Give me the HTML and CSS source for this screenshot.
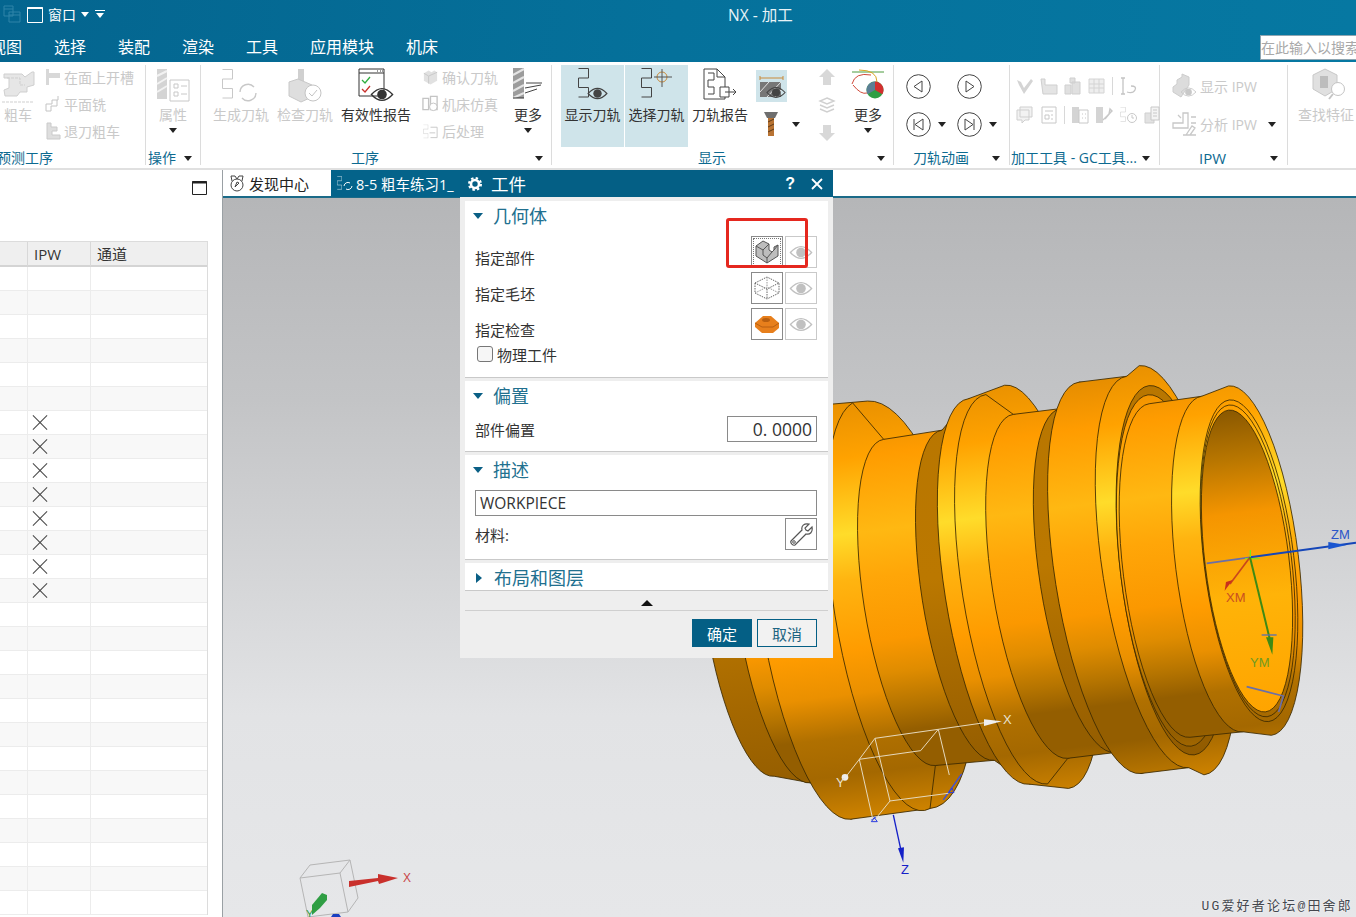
FILE: index.html
```html
<!DOCTYPE html>
<html lang="zh">
<head>
<meta charset="utf-8">
<title>NX - 加工</title>
<link rel="stylesheet" href="styles.css">
</head>
<body>
<svg class="defs" width="0" height="0" aria-hidden="true">
  <defs>
    <symbol id="eye" viewBox="0 0 22 16"><path d="M1 8Q11-3 21 8 11 19 1 8Z" fill="none" stroke="currentColor" stroke-width="1.2"/><circle cx="11" cy="8" r="4.5" fill="currentColor"/></symbol>
    <symbol id="zig" viewBox="0 0 11 30"><path d="M.5.5h10v9.5H.5v9.5h10v9.5H.5" fill="none" stroke="currentColor" stroke-width="1"/></symbol>
    <symbol id="block" viewBox="0 0 18 18"><path d="M2 5l5-3 3 2 3-2 3 2v9l-7 4-7-4z" fill="currentColor" opacity=".55"/><path d="M2 5l5 3v8M7 8l9-4" fill="none" stroke="currentColor"/></symbol>
    <linearGradient id="gMain" gradientUnits="userSpaceOnUse" x1="0" y1="-210" x2="0" y2="210">
      <stop offset="0" stop-color="#e08a00"/><stop offset=".14" stop-color="#ff9c00"/><stop offset=".32" stop-color="#ffb812"/><stop offset=".43" stop-color="#ffa608"/><stop offset=".58" stop-color="#fb9800"/><stop offset=".66" stop-color="#df8c00"/><stop offset=".74" stop-color="#b57400"/><stop offset=".8" stop-color="#945e00"/><stop offset=".89" stop-color="#945e00"/><stop offset="1" stop-color="#c27c00"/>
    </linearGradient>
    <linearGradient id="gBright" gradientUnits="userSpaceOnUse" x1="0" y1="-210" x2="0" y2="210">
      <stop offset="0" stop-color="#e89000"/><stop offset=".14" stop-color="#ffa200"/><stop offset=".32" stop-color="#ffdc2a"/><stop offset=".43" stop-color="#ffb410"/><stop offset=".595" stop-color="#ff9c00"/><stop offset=".7" stop-color="#ea9000"/><stop offset=".8" stop-color="#b07000"/><stop offset=".89" stop-color="#a46800"/><stop offset="1" stop-color="#d08400"/>
    </linearGradient>
    <linearGradient id="gDark" gradientUnits="userSpaceOnUse" x1="0" y1="-210" x2="0" y2="210">
      <stop offset="0" stop-color="#b87600"/><stop offset=".45" stop-color="#bb7800"/><stop offset=".7" stop-color="#a56800"/><stop offset="1" stop-color="#8c5800"/>
    </linearGradient>
    <linearGradient id="gHole" gradientUnits="userSpaceOnUse" x1="0" y1="-152" x2="0" y2="152">
      <stop offset="0" stop-color="#8a5800"/><stop offset=".16" stop-color="#b87600"/><stop offset=".34" stop-color="#f59500"/><stop offset=".62" stop-color="#ffb308"/><stop offset="1" stop-color="#ffa400"/>
    </linearGradient>
  </defs>
</svg>

<div class="app">
  <header class="titlebar">
    <div class="quick">
      <svg class="qa-dim" width="18" height="18" viewBox="0 0 18 18"><path d="M1 1h9v10H1zM1 4h9M6 7h11v10H6zM6 10h11" fill="none" stroke="currentColor"/></svg>
      <svg class="qa-win" width="16" height="17" viewBox="0 0 16 17"><path d="M.5 1.5h15v15H.5z" fill="none" stroke="currentColor"/><path d="M.5 2h15" stroke="currentColor" stroke-width="2"/></svg>
      <span class="qa-text">窗口</span>
      <i class="caret caret-white"></i>
      <span class="qa-more"><i class="caret caret-white"></i></span>
    </div>
    <div class="app-title">NX - 加工</div>
  </header>

  <nav class="menubar">
    <span>视图</span><span>选择</span><span>装配</span><span>渲染</span><span>工具</span><span>应用模块</span><span>机床</span>
    <div class="search">在此输入以搜索</div>
  </nav>

  <section class="ribbon">
    <div class="group g-rough">
      <div class="group-body">
        <div class="big off w36">
          <svg class="ic" width="34" height="36" viewBox="0 0 34 36"><path d="M3 6h18l3 3 7-5h2v13l-7 2v5h-7l-3 4H4l-1-6 5-2V10H3z" fill="#e6e6e6" stroke="#cfcfcf"/><path d="M6 10h13v7h5M1 34h32" fill="none" stroke="#cfcfcf" stroke-dasharray="3 1"/></svg>
          <span>粗车</span>
        </div>
        <div class="smalls ml9">
          <div class="small off"><svg width="16" height="18" viewBox="0 0 16 18"><path d="M1 1h3v16H1zM4 5h11v5H4z" fill="#d8d8d8"/></svg><span>在面上开槽</span></div>
          <div class="small off"><svg width="16" height="18" viewBox="0 0 16 18"><path d="M1 16V9h6V5h6v-4M1 16h5v-5h6V5" fill="none" stroke="#c4c4c4"/></svg><span>平面铣</span></div>
          <div class="small off"><svg width="16" height="18" viewBox="0 0 16 18"><path d="M2 1v16h13v-4H7V9h5V5H6V1z" fill="#dedede" stroke="#cacaca"/></svg><span>退刀粗车</span></div>
        </div>
      </div>
      <div class="group-label lb-rough">预测工序</div>
    </div>

    <div class="group g-oper">
      <div class="group-body">
        <div class="big off w56">
          <svg class="ic" width="34" height="36" viewBox="0 0 34 36"><path d="M1 1h10v30H1z" fill="#d4d4d4"/><path d="M1 8l10-5M1 16l10-6M1 24l10-6" stroke="#f2f2f2" stroke-width="2"/><path d="M14 12h19v21H14zM18 16h4v4h-4zM18 24h4v4h-4zM25 18h6M25 26h6" fill="none" stroke="#c8c8c8"/></svg>
          <span>属性</span>
          <i class="caret more-caret"></i>
        </div>
      </div>
      <div class="group-label lb-left">操作<i class="caret"></i></div>
    </div>

    <div class="group g-op">
      <div class="group-body">
        <div class="big off w64">
          <svg class="ic" width="38" height="36" viewBox="0 0 38 36"><use href="#zig" x="0" y="1" width="11" height="30" color="#c8c8c8"/><path d="M18 24a8 8 0 0 1 14-5m2 6a8 8 0 0 1-14 5" fill="none" stroke="#c8c8c8" stroke-width="1.4"/></svg>
          <span>生成刀轨</span>
        </div>
        <div class="big off w64">
          <svg class="ic" width="38" height="36" viewBox="0 0 38 36"><path d="M12 1h6v12h-6z" fill="#d0d0d0"/><path d="M3 14l9-3 14 6v12l-11 5-12-6z" fill="#dedede" stroke="#c8c8c8"/><circle cx="27" cy="25" r="8" fill="#fff" stroke="#c4c4c4"/><path d="M23 25l3 3 5-6" fill="none" stroke="#c4c4c4"/></svg>
          <span>检查刀轨</span>
        </div>
        <div class="big w78">
          <svg class="ic" width="36" height="36" viewBox="0 0 36 36"><path d="M1 1h25v27H1zM1 5h25" fill="none" stroke="#333"/><path d="M19 3h1M22 3h1M24 3h1" stroke="#333"/><path d="M4 12l3 3 5-6" fill="none" stroke="#2fae3f" stroke-width="1.3"/><path d="M4 21l3 3 5-6" fill="none" stroke="#c9302c" stroke-width="1.3"/><use href="#eye" x="12" y="18" width="24" height="17" color="#333"/></svg>
          <span>有效性报告</span>
        </div>
        <div class="smalls ml7">
          <div class="small off"><svg width="17" height="18" viewBox="0 0 18 18"><use href="#block" width="18" height="18" color="#c8c8c8"/></svg><span>确认刀轨</span></div>
          <div class="small off"><svg width="17" height="18" viewBox="0 0 18 18"><path d="M1 3h6v12H1zM9 1h7v14H9z" fill="none" stroke="#c4c4c4" stroke-width="1.4"/><circle cx="12" cy="12" r="4" fill="#fff" stroke="#c4c4c4"/></svg><span>机床仿真</span></div>
          <div class="small off"><svg width="17" height="18" viewBox="0 0 18 18"><use href="#zig" x="1" y="2" width="6" height="15" color="#c8c8c8"/><path d="M9 5h7v11H9M8 11h6" fill="none" stroke="#c8c8c8"/></svg><span>后处理</span></div>
        </div>
        <div class="big w36 ml12">
          <svg class="ic" width="32" height="36" viewBox="0 0 32 36"><path d="M1 0h11v30H1z" fill="#9c9c9c"/><path d="M1 7l11-6M1 15l11-6M1 23l11-6M1 30l11-5" stroke="#e4e4e4" stroke-width="2"/><path d="M1 30h11" stroke="#333"/><path d="M14 15h16M13 20l16-3M13 25l12-4" fill="none" stroke="#444"/></svg>
          <span>更多</span>
          <i class="caret more-caret"></i>
        </div>
      </div>
      <div class="group-label">工序<i class="caret caret-far"></i></div>
    </div>

    <div class="group g-show">
      <div class="group-body">
        <div class="big on w63">
          <svg class="ic" width="34" height="36" viewBox="0 0 34 36"><use href="#zig" x="2" y="0" width="11" height="30" color="#444"/><use href="#eye" x="11" y="18" width="21" height="15" color="#444"/></svg>
          <span>显示刀轨</span>
        </div>
        <div class="big on w63 ml1">
          <svg class="ic" width="34" height="36" viewBox="0 0 34 36"><use href="#zig" x="1" y="0" width="11" height="30" color="#444"/><circle cx="22" cy="9" r="5" fill="none" stroke="#c98a3a"/><path d="M14 9h18M22 1v18" stroke="#555"/></svg>
          <span>选择刀轨</span>
        </div>
        <div class="big w62 ml1">
          <svg class="ic" width="34" height="36" viewBox="0 0 34 36"><path d="M1 1h13l8 8v22H1z" fill="none" stroke="#444"/><path d="M14 1v8h8M5 5h6v7H5v7h6v7H5" fill="none" stroke="#444"/><path d="M17 19h9v10h-9zM22 24h11m-3-3l3 3-3 3" fill="#fff" stroke="#444"/></svg>
          <span>刀轨报告</span>
        </div>
        <div class="tool-col">
          <div class="toggle">
            <svg width="31" height="32" viewBox="0 0 31 32"><path d="M4 8h23M4 6v4m23-4v4" stroke="#c98a3a" fill="none"/><path d="M4 12h21v15H4z" fill="#777"/><path d="M4 22l9-10M11 27l14-15M19 27l6-7" stroke="#e0e0e0"/><use href="#eye" x="10" y="15" width="20" height="15" color="#444"/></svg>
          </div>
          <div class="tool-row">
            <svg width="16" height="26" viewBox="0 0 16 26"><path d="M1 1h14l-3 6H4z" fill="#6e6e6e"/><path d="M5 7h6v18H5z" fill="#b87333"/><path d="M5 11l6-3M5 16l6-3M5 21l6-3" stroke="#5c3a18"/></svg>
            <i class="caret"></i>
          </div>
        </div>
        <div class="arrow-col">
          <svg width="18" height="18" viewBox="0 0 18 18"><path d="M9 1l8 8h-4v8H5V9H1z" fill="#d8d8d8"/></svg>
          <svg width="18" height="16" viewBox="0 0 18 16"><path d="M9 1l7 3-7 3-7-3zM2 8l7 3 7-3M2 12l7 3 7-3" fill="none" stroke="#d0d0d0" stroke-width="1.4"/></svg>
          <svg width="18" height="18" viewBox="0 0 18 18"><path d="M9 17l8-8h-4V1H5v8H1z" fill="#d8d8d8"/></svg>
        </div>
        <div class="big w44 ml4">
          <svg class="ic" width="34" height="36" viewBox="0 0 34 36"><path d="M1 4h32" stroke="#4a9a3c"/><path d="M8 2q18 0 18 12" fill="none" stroke="#d9a520"/><path d="M1 16Q4 4 20 7M2 17q8 10 14 8" fill="none" stroke="#d04a3a"/><circle cx="24" cy="22" r="8.5" fill="#2f9e44"/><path d="M24 22V13.500a8.500 8.500 0 0 1 7.400 12.700z" fill="#d32f2f"/><path d="M24 22V13.500a8.500 8.500 0 0 0-7.400 12.700z" fill="#5b7f95"/></svg>
          <span>更多</span>
          <i class="caret more-caret"></i>
        </div>
      </div>
      <div class="group-label lb-show">显示<i class="caret caret-show"></i></div>
    </div>

    <div class="group g-anim">
      <div class="group-body anim-grid">
        <div class="anim-btn"><svg width="25" height="25" viewBox="0 0 25 25"><circle cx="12.500" cy="12.500" r="11.800" fill="none" stroke="#444"/><path d="M16 7v11L8 12.500z" fill="none" stroke="#444"/></svg></div>
        <div class="anim-btn"><svg width="25" height="25" viewBox="0 0 25 25"><circle cx="12.500" cy="12.500" r="11.800" fill="none" stroke="#444"/><path d="M9 7v11l8-5.500z" fill="none" stroke="#444"/></svg></div>
        <div class="anim-btn"><svg width="25" height="25" viewBox="0 0 25 25"><circle cx="12.500" cy="12.500" r="11.800" fill="none" stroke="#444"/><path d="M8 7v11M17 7v11L9 12.500z" fill="none" stroke="#444"/></svg><i class="caret"></i></div>
        <div class="anim-btn"><svg width="25" height="25" viewBox="0 0 25 25"><circle cx="12.500" cy="12.500" r="11.800" fill="none" stroke="#444"/><path d="M17 7v11M8 7v11l8-5.500z" fill="none" stroke="#444"/></svg><i class="caret"></i></div>
      </div>
      <div class="group-label lb-anim">刀轨动画<i class="caret"></i></div>
    </div>

    <div class="group g-gc">
      <div class="group-body gc-rows">
        <div class="gc-row">
          <svg width="18" height="18" viewBox="0 0 18 18"><path d="M1 3l4 2 3 6 7-9 2 2-9 13L3 8z" fill="#d4d4d4"/></svg>
          <svg width="18" height="18" viewBox="0 0 18 18"><path d="M1 2h4v6h12v9H3z" fill="#e4e4e4" stroke="#cfcfcf"/></svg>
          <svg width="18" height="18" viewBox="0 0 18 18"><path d="M1 8h6v9H1zM8 5h8v12H8zM6 1h5v5H6z" fill="#e0e0e0" stroke="#cfcfcf"/></svg>
          <svg width="18" height="18" viewBox="0 0 18 18"><path d="M1 2h15v14H1zM1 7h15M1 11h15M6 2v14M11 2v14" fill="#eee" stroke="#d4d4d4"/></svg>
          <i class="gc-sep"></i>
          <svg width="18" height="18" viewBox="0 0 18 18"><path d="M2 1h4M2 17h4M4 1v16M8 15q6 2 8-2t-4-4" fill="none" stroke="#c4c4c4" stroke-width="1.3"/></svg>
        </div>
        <div class="gc-row">
          <svg width="18" height="18" viewBox="0 0 18 18"><path d="M4 1h12v10H4zM1 4h12v10H9l-3 3v-3H1z" fill="#f2f2f2" stroke="#cfcfcf"/></svg>
          <svg width="18" height="18" viewBox="0 0 18 18"><path d="M2 1h14v16H2zM5 5h8M5 9h4v4H5zM11 9h2M11 13h2" fill="none" stroke="#c8c8c8"/></svg>
          <i class="gc-sep"></i>
          <svg width="18" height="18" viewBox="0 0 18 18"><path d="M1 1h7v16H1z" fill="#d4d4d4"/><path d="M8 4h9v13H8zM11 8h1M14 8h1M11 12h1M14 12h1" fill="none" stroke="#c8c8c8"/></svg>
          <svg width="18" height="18" viewBox="0 0 18 18"><path d="M1 1h7v16H1z" fill="#d4d4d4"/><path d="M8 14l6-6 1-5 2 2-2 2-5 6" fill="none" stroke="#c8c8c8" stroke-width="1.4"/></svg>
          <svg width="18" height="18" viewBox="0 0 18 18"><use href="#zig" x="1" y="1" width="6" height="15" color="#c8c8c8"/><circle cx="13" cy="12" r="4.500" fill="none" stroke="#c8c8c8"/><path d="M13 9v3h2" stroke="#c8c8c8" fill="none"/></svg>
          <svg width="18" height="18" viewBox="0 0 18 18"><path d="M2 7h9v10H2z" fill="#e2e2e2" stroke="#cfcfcf"/><path d="M8 1h8v13H8zM10 4h4M10 7h4M10 10h4" fill="#f4f4f4" stroke="#c8c8c8"/></svg>
        </div>
      </div>
      <div class="group-label lb-gc">加工工具 - GC工具...<i class="caret"></i></div>
    </div>

    <div class="group g-ipw">
      <div class="group-body ipw-rows">
        <div class="ipw-row off">
          <svg width="25" height="26" viewBox="0 0 25 26"><path d="M1 14l4-3V7l5-3V1l7 3v8L9 24l-8-5z" fill="#dcdcdc" stroke="#cdcdcd"/><use href="#eye" x="8" y="13" width="17" height="12" color="#c8c8c8"/></svg>
          <span>显示 IPW</span>
        </div>
        <div class="ipw-row off">
          <svg width="25" height="26" viewBox="0 0 25 26"><path d="M1 12h10V2h5v15H1zM19 6h5M19 12h5M6 4l3 3M24 24H11M14 24l6-9 3 2-5 7" fill="none" stroke="#c8c8c8" stroke-width="1.3"/></svg>
          <span>分析 IPW</span>
          <i class="caret"></i>
        </div>
      </div>
      <div class="group-label lb-ipw">IPW<i class="caret"></i></div>
    </div>

    <div class="group g-find">
      <div class="group-body">
        <div class="big off find">
          <svg class="ic" width="34" height="36" viewBox="0 0 34 36"><path d="M1 7l12-6 12 6v14l-12 7-12-7z" fill="#e0e0e0" stroke="#c8c8c8"/><path d="M8 8h8v12H8z" fill="#bdbdbd"/><circle cx="26" cy="21" r="6.500" fill="#fff" stroke="#c4c4c4"/><path d="M21 26l-4 5" stroke="#c4c4c4" stroke-width="2"/></svg>
          <span>查找特征</span>
        </div>
      </div>
    </div>
  </section>

  <div class="workspace">
    <aside class="left-panel">
      <div class="panel-top"><svg class="restore" width="15" height="14" viewBox="0 0 15 14"><path d="M.5.500h14v13H.5z" fill="none" stroke="#222"/><path d="M0 1.500h15" stroke="#222" stroke-width="2"/></svg></div>
      <div class="nav-table">
        <div class="t-row t-head"><div></div><div>IPW</div><div>通道</div></div>
        <div class="t-row"><div></div><div></div><div></div></div>
        <div class="t-row"><div></div><div></div><div></div></div>
        <div class="t-row"><div></div><div></div><div></div></div>
        <div class="t-row"><div></div><div></div><div></div></div>
        <div class="t-row"><div></div><div></div><div></div></div>
        <div class="t-row"><div></div><div></div><div></div></div>
        <div class="t-row"><div></div><div class="x"></div><div></div></div>
        <div class="t-row"><div></div><div class="x"></div><div></div></div>
        <div class="t-row"><div></div><div class="x"></div><div></div></div>
        <div class="t-row"><div></div><div class="x"></div><div></div></div>
        <div class="t-row"><div></div><div class="x"></div><div></div></div>
        <div class="t-row"><div></div><div class="x"></div><div></div></div>
        <div class="t-row"><div></div><div class="x"></div><div></div></div>
        <div class="t-row"><div></div><div class="x"></div><div></div></div>
        <div class="t-row"><div></div><div></div><div></div></div>
        <div class="t-row"><div></div><div></div><div></div></div>
        <div class="t-row"><div></div><div></div><div></div></div>
        <div class="t-row"><div></div><div></div><div></div></div>
        <div class="t-row"><div></div><div></div><div></div></div>
        <div class="t-row"><div></div><div></div><div></div></div>
        <div class="t-row"><div></div><div></div><div></div></div>
        <div class="t-row"><div></div><div></div><div></div></div>
        <div class="t-row"><div></div><div></div><div></div></div>
        <div class="t-row"><div></div><div></div><div></div></div>
        <div class="t-row"><div></div><div></div><div></div></div>
        <div class="t-row"><div></div><div></div><div></div></div>
        <div class="t-row"><div></div><div></div><div></div></div>
      </div>
    </aside>

    <main class="main">
      <div class="tabs">
        <div class="tab tab-light">
          <svg width="16" height="17" viewBox="0 0 16 17"><circle cx="8" cy="10" r="6" fill="none" stroke="#444"/><path d="M3 6L2 1h4l2 3 2-3h4l-1 5M6 12l2-5 2 1z" fill="none" stroke="#444"/></svg>
          <span>发现中心</span>
        </div>
        <div class="tab tab-dark">
          <svg width="16" height="17" viewBox="0 0 16 17"><use href="#zig" x="0" y="1" width="5" height="14" color="#fff"/><path d="M7 11a4 4 0 0 1 6-3m2 3a4 4 0 0 1-6 3" fill="none" stroke="#fff"/></svg>
          <span>8-5 粗车练习1_</span>
        </div>
      </div>
      <div class="viewport">
        <svg class="scene" viewBox="223 198 1133 719" preserveAspectRatio="none">
          <g transform="translate(1247 561) rotate(-7)" stroke="#3a2800" stroke-width=".8">
            <g transform="skewX(2)">
            <path fill="url(#gDark)" d="M-501-156A43 156 0 0 0-501 156L-466 167A46 167 0 0 0-466-167Z"/>
            <path fill="url(#gMain)" d="M-466-167A46 167 0 0 0-466 167L-432 208A57.400 208 0 0 0-432-208Z"/>
            <path fill="url(#gBright)" d="M-432-208A57.400 208 0 0 0-432 208L-352 207A70 206 0 0 0-350-205Z"/>
            <path fill="url(#gBright)" d="M-365-205A56.600 205 0 0 0-352 207L-340 165A45.500 165 0 0 0-340-165Z"/>
            <path fill="url(#gMain)" d="M-340-165A45.500 165 0 0 0-340 165L-281 167A46 167 0 0 0-281-167Z"/>
            <path fill="url(#gDark)" d="M-281-167A46 167 0 0 0-281 167L-250 195A53.800 195 0 0 0-250-195Z"/>
            <path fill="url(#gBright)" d="M-250-195A53.800 195 0 0 0-250 195L-212 204A56 204 0 0 0-212-204Z"/>
            <path fill="url(#gBright)" d="M-232-197A54.400 197 0 0 0-232 197L-208 174A48 174 0 0 0-208-174Z"/>
            <path fill="url(#gMain)" d="M-208-174A48 174 0 0 0-208 174L-160 174A48 174 0 0 0-160-174Z"/>
            <path fill="url(#gDark)" d="M-160-174A48 174 0 0 0-160 174L-138 198A54.600 198 0 0 0-138-198Z"/>
            <path fill="url(#gMain)" d="M-138-198A54.600 198 0 0 0-138 198L-90 198A54.600 198 0 0 0-90-198Z"/>
            <path fill="url(#gBright)" d="M-90-198A54.600 198 0 0 0-90 198L-76 207A57.100 207 0 0 0-76-207Z"/>
            </g>
            <ellipse cx="-76" cy="0" rx="51" ry="186" fill="url(#gDark)"/>
            <ellipse cx="-78" cy="0" rx="49" ry="177" fill="url(#gMain)"/>
            <path fill="url(#gMain)" d="M-78-168A46.400 168 0 0 0-78 168L-25 169A46.600 169 0 0 0-25-169Z"/>
            <path fill="url(#gBright)" d="M-25-169A46.600 169 0 0 0-25 169L3 176A48.600 176 0 0 0 3-176Z"/>
            <ellipse cx="2" cy="0" rx="45" ry="162" fill="url(#gBright)"/>
            <ellipse cx="1" cy="0" rx="43.500" ry="157" fill="url(#gBright)"/>
            <ellipse cx="0" cy="0" rx="42" ry="152" fill="url(#gHole)"/>
          </g>
          <g transform="translate(1190 520) scale(.3333)" fill="none">
            <path d="M50 130L180 112" stroke="#6a6fa8" stroke-width="5"/>
            <path d="M180 112L498 68" stroke="#1546b8" stroke-width="6"/>
            <path d="M415 66l55 9-55 13z" fill="#1a56d0"/>
            <path d="M165 116h44M181 90v30" stroke="#7ee01e" stroke-width="4"/>
            <path d="M180 112L120 192" stroke="#c9461c" stroke-width="5"/>
            <path d="M128 180l-24 32 4-26z" fill="#c9301c"/>
            <path d="M180 112L240 360" stroke="#3f8a14" stroke-width="6"/>
            <path d="M228 352h22l-3 52z" fill="#3f8a14"/>
            <path d="M215 345h45" stroke="#5a70b0" stroke-width="4"/>
            <path d="M170 500l110 28-14 48" stroke="#6a6fa8" stroke-width="5"/>
          </g>
          <text class="lab lab-zm" x="1331" y="539">ZM</text>
          <text class="lab lab-xm" x="1226" y="602">XM</text>
          <text class="lab lab-ym" x="1250" y="667">YM</text>
          <g transform="translate(680 640) scale(.3333)" fill="none">
            <path d="M790 480l55-78M575 540l12-8" stroke="#3a50e0" stroke-width="4"/>
            <path d="M585 295L775 268 722 332 538 358zM585 295L630 483M775 268L808 405M538 358L580 545M630 483L805 460M630 483L580 545" stroke="#e6d9bd" stroke-width="3"/>
            <path d="M775 268L915 248M538 358L498 410" stroke="#e6d9bd" stroke-width="3"/>
            <path d="M912 238l54 6-54 14z" fill="#eee"/>
            <circle cx="495" cy="412" r="10" fill="#eee"/>
            <path d="M640 525L665 640" stroke="#1420c8" stroke-width="4"/>
            <path d="M654 625l18-3-2 46z" fill="#1420c8"/>
            <path d="M574 545h18l-9-12zM806 458h16l-6-14z" stroke="#2a3ce0" stroke-width="3"/>
          </g>
          <text class="lab lab-x" x="1003" y="724">X</text>
          <text class="lab lab-x" x="836" y="787">Y</text>
          <text class="lab lab-z" x="901" y="874">Z</text>
          <g fill="none">
            <path d="M300 878L310 865 350 860 340 873zM340 873L348 912 308 917M300 878L308 917M350 860L358 898 348 912" stroke="#b5b5b5"/>
            <path d="M349 881L378 878 378 874 398 878 379 884 378 881 349 887Z" fill="#c9302c"/>
            <path d="M327 895L322 893 312 905 312 915 320 908 327 900Z" fill="#2f9e44"/>
            <path d="M331 917h10l-2-3h-6z" fill="#1a3fc0"/>
          </g>
          <text class="lab lab-ax" x="403" y="882">X</text>
          <text class="lab lab-ay" x="306" y="918">Y</text>
        </svg>
        <div class="watermark">UG爱好者论坛@田舍郎</div>
      </div>
    </main>
  </div>

  <div class="dialog">
    <div class="dlg-title">
      <svg width="14" height="14" viewBox="0 0 14 14"><circle cx="7" cy="7" r="4" fill="none" stroke="#fff" stroke-width="2.600"/><circle cx="7" cy="7" r="5.900" fill="none" stroke="#fff" stroke-width="2.200" stroke-dasharray="2.400 2.230"/></svg>
      <span class="dlg-name">工件</span>
      <span class="dlg-help">?</span>
      <svg class="dlg-x" width="12" height="12" viewBox="0 0 12 12"><path d="M1 1l10 10M11 1L1 11" stroke="#fff" stroke-width="1.800"/></svg>
    </div>
    <div class="dlg-body">
      <section class="sec sec-geo">
        <div class="sec-head"><i class="tri"></i>几何体</div>
        <div class="geo-row">
          <span>指定部件</span>
          <button class="ib ib-dotted"><svg width="24" height="24" viewBox="0 0 24 24"><path d="M1 6l7-5 6 3v6l3 2 2-2V7l4-2v11l-11 7-11-7z" fill="#bdbdbd" stroke="#555"/><path d="M1 6l7 4v5l4 3v5M8 10l6-6M12 18l5-6M19 10l4-5" fill="none" stroke="#555"/></svg></button>
          <button class="ib eye"><svg width="24" height="17"><use href="#eye" width="24" height="17"/></svg></button>
        </div>
        <div class="geo-row">
          <span>指定毛坯</span>
          <button class="ib"><svg width="26" height="26" viewBox="0 0 26 26"><path d="M1 8l12-6 12 6-12 6zM1 8v10l12 6 12-6V8M13 14v10" fill="none" stroke="#666" stroke-dasharray="1.500 1"/><path d="M1 18l12-6 12 6M13 2v10" fill="none" stroke="#999" stroke-dasharray="1.500 1"/></svg></button>
          <button class="ib eye"><svg width="24" height="17"><use href="#eye" width="24" height="17"/></svg></button>
        </div>
        <div class="geo-row">
          <span>指定检查</span>
          <button class="ib"><svg width="26" height="20" viewBox="0 0 26 20"><path d="M1 9l8-7h8l8 7v5l-6 5H8L1 13z" fill="#e77f1c"/><path d="M1 9l7 4h11l6-4" fill="none" stroke="#b85f10"/><ellipse cx="12" cy="6" rx="4" ry="2" fill="#b85f10"/></svg></button>
          <button class="ib eye"><svg width="24" height="17"><use href="#eye" width="24" height="17"/></svg></button>
        </div>
        <label class="check"><i class="box"></i>物理工件</label>
      </section>
      <section class="sec sec-off">
        <div class="sec-head"><i class="tri"></i>偏置</div>
        <div class="off-row"><span>部件偏置</span><div class="input num">0. 0000</div></div>
      </section>
      <section class="sec sec-desc">
        <div class="sec-head"><i class="tri"></i>描述</div>
        <div class="input desc">WORKPIECE</div>
        <div class="mat-row">
          <span>材料:</span>
          <button class="ib"><svg width="24" height="24" viewBox="0 0 24 24"><path d="M2 19l11-11c-1-4 2-7 7-6l-4 4 1 2 2 1 4-4c1 5-2 8-6 7L6 23c-2 1-5-2-4-4z" fill="none" stroke="#555" stroke-width="1.200"/><circle cx="5" cy="20" r="1.300" fill="none" stroke="#555"/></svg></button>
        </div>
      </section>
      <section class="sec sec-layout">
        <div class="sec-head"><i class="tri-r"></i>布局和图层</div>
      </section>
      <div class="collapse"><i class="tri-up"></i></div>
      <div class="dlg-foot">
        <button class="btn btn-ok">确定</button>
        <button class="btn btn-cancel">取消</button>
      </div>
    </div>
  </div>
  <div class="highlight"></div>
</div>
</body>
</html>
```
FILE: styles.css
```css
* { box-sizing: border-box; }
html, body { margin: 0; padding: 0; height: 100%; overflow: hidden; background: #fff; }
body { font-family: "Open Sans", "Noto Sans CJK SC", sans-serif; font-size: 14px; color: #333; }
.defs { position: absolute; }
.app { position: relative; width: 1356px; height: 917px; overflow: hidden; display: flex; flex-direction: column; }

/* top bars */
.titlebar { height: 31px; padding-bottom: 3px; background: linear-gradient(90deg, #04658f, #05719b 50%, #0678a2); color: #fff; display: flex; align-items: center; flex: none; }
.quick { width: 728px; display: flex; align-items: center; padding-left: 3px; flex: none; }
.qa-dim { color: #2e84a8; }
.qa-win { margin-left: 6px; color: #fff; }
.qa-text { margin-left: 5px; font-size: 14px; }
.qa-text + .caret { margin-left: 5px; }
.qa-more { margin-left: 6px; display: block; border-top: 1.500px solid #fff; padding-top: 2px; width: 10px; height: 8px; line-height: 0; }
.qa-more .caret { display: block; margin-left: 1px; }
.app-title { font-size: 15.500px; color: #e8f3f7; }
.menubar { height: 31px; padding-bottom: 2px; background: linear-gradient(90deg, #04658f, #05719b 50%, #0678a2); display: flex; align-items: center; gap: 32px; color: #fff; font-size: 16px; margin-left: -10px; width: 1366px; flex: none; }
.search { margin-left: auto; width: 96px; height: 25px; background: #fff; border: 1px solid #8fa6b2; border-right: 0; font-size: 14px; line-height: 23px; color: #a8a8a8; overflow: hidden; white-space: nowrap; margin-top: 3px; }

.caret { display: inline-block; width: 0; height: 0; border: 4px solid transparent; border-top: 5px solid #222; border-bottom: 0; }
.caret-white { border-top-color: #fff; }

/* ribbon */
.ribbon { height: 108px; display: flex; border-bottom: 2px solid #e0e0e0; background: #fff; flex: none; }
.group { margin-top: 3px; height: 100px; border-right: 1px solid #dcdcdc; display: flex; flex-direction: column; flex: none; position: relative; }
.group-body { height: 84px; display: flex; flex: none; }
.group-label { height: 18px; line-height: 18px; font-size: 14px; color: #0d6a90; text-align: center; white-space: nowrap; }
.g-rough { width: 146px; }
.g-oper { width: 55px; }
.g-op { width: 351px; padding-left: 8px; }
.g-show { width: 342px; padding-left: 9px; }
.g-anim { width: 116px; }
.g-gc { width: 150px; }
.g-ipw { width: 128px; }
.g-find { border-right: 0; flex: 1; padding-left: 10px; }

.big { display: flex; flex-direction: column; align-items: center; padding-top: 3px; height: 82px; font-size: 14px; white-space: nowrap; color: #333; }
.big .ic { height: 36px; flex: none; }
.big span { line-height: 18px; margin-top: 2px; }
.big .more-caret { margin-top: 4px; }
.off, .off span { color: #c9c9c9; }
.on { background: #cfe4ea; }
.w36 { width: 36px; } .w44 { width: 44px; } .w56 { width: 56px; } .w62 { width: 62px; } .w63 { width: 63px; } .w64 { width: 64px; } .w78 { width: 78px; }
.ml1 { margin-left: 1px; } .ml4 { margin-left: 4px; } .ml7 { margin-left: 7px; } .ml9 { margin-left: 9px; } .ml12 { margin-left: 12px; }
.find { width: 70px; align-items: flex-start; }
.find .ic { margin-left: 14px; }

.smalls { display: flex; flex-direction: column; gap: 9px; padding-top: 3px; }
.small { display: flex; align-items: center; height: 18px; gap: 3px; white-space: nowrap; font-size: 14px; }
.tool-col { margin-left: 5px; width: 48px; padding-top: 5px; display: flex; flex-direction: column; }
.toggle { width: 31px; height: 32px; background: #cfe4ea; }
.toggle svg, .anim-btn svg { display: block; }
.tool-row { display: flex; align-items: center; margin-top: 9px; padding-left: 7px; gap: 13px; }
.tool-row svg { display: block; }
.arrow-col { margin-left: 8px; width: 30px; padding-top: 3px; display: flex; flex-direction: column; align-items: center; gap: 11px; }
.arrow-col svg { display: block; }

.lb-rough { margin-left: -3px; text-align: left; }
.lb-left { text-align: left; padding-left: 2px; display: flex; align-items: center; gap: 8px; }
.g-op .group-label { position: relative; padding-right: 32px; margin-left: 2px; }
.caret-far { position: absolute; right: 8px; top: 7px; }
.lb-show { position: relative; padding-right: 30px; }
.caret-show { position: absolute; right: 8px; top: 7px; }
.lb-anim { display: flex; align-items: center; padding-left: 19px; gap: 23px; }
.lb-gc { display: flex; align-items: center; padding-left: 1px; gap: 5px; font-size: 14px; }
.lb-ipw { display: flex; align-items: center; padding-left: 39px; gap: 44px; font-size: 15px; }

.anim-grid { display: grid; grid-template-columns: 51px 51px; grid-auto-rows: 38px; padding: 9px 0 0 12px; }
.anim-btn { display: flex; align-items: center; gap: 7px; height: 25px; }
.gc-rows { flex-direction: column; gap: 11px; padding: 12px 0 0 6px; }
.gc-row { display: flex; align-items: center; gap: 6px; height: 18px; }
.gc-row svg { display: block; flex: none; }
.gc-sep { width: 1px; height: 18px; background: #d8d8d8; flex: none; }
.ipw-rows { flex-direction: column; gap: 12px; padding: 8px 0 0 12px; }
.ipw-row { display: flex; align-items: center; gap: 3px; font-size: 14px; height: 26px; white-space: nowrap; }
.ipw-row .caret { margin-left: 8px; }

/* workspace */
.workspace { flex: 1; display: flex; min-height: 0; }
.left-panel { width: 223px; flex: none; border-right: 1px solid #9aa0a4; background: #fff; padding-right: 15px; overflow: hidden; }
.panel-top { height: 71px; padding: 11px 0 0 192px; }
.restore { display: block; }
.nav-table { border: 1px solid #dcdcdc; border-left: 0; border-bottom: 0; width: 208px; }
.t-row { display: grid; grid-template-columns: 28px 63px 1fr; height: 24px; border-bottom: 1px solid #ececec; }
.t-row:nth-child(odd) { background: #f8f8f8; }
.t-row > div { border-right: 1px solid #ececec; position: relative; }
.t-row > div:last-child { border-right: 0; }
.t-head, .t-row.t-head { background: #efefef; height: 25px; border-bottom: 2px solid #d4d4d4; font-size: 15px; line-height: 24px; }
.t-head > div { padding-left: 6px; border-right-color: #d8d8d8; }
.x::before, .x::after { content: ""; position: absolute; left: 2px; top: 11px; width: 20px; height: 1px; background: #444; transform: rotate(45deg); }
.x::after { transform: rotate(-45deg); }

.main { flex: 1; display: flex; flex-direction: column; min-width: 0; }
.tabs { height: 28px; flex: none; display: flex; border-bottom: 2px solid #1a6a88; background: #fff; }
.tab { height: 26px; display: flex; align-items: center; font-size: 15px; }
.tab-light { width: 108px; padding-left: 6px; gap: 4px; color: #222; }
.tab-dark { width: 130px; padding-left: 6px; gap: 3px; background: #04638a; color: #fff; height: 27px; white-space: nowrap; font-size: 14.500px; }
.viewport { flex: 1; position: relative; overflow: hidden; background: linear-gradient(180deg, #b5b6b8 0, #c3c4c6 28%, #e2e3e5 72%, #e6e7e9 100%); }
.scene { position: absolute; inset: 0; width: 100%; height: 100%; }
.lab { font-family: "Liberation Sans", sans-serif; font-size: 13px; }
.lab-zm { fill: #2b55c9; }
.lab-xm { fill: #c94f22; }
.lab-ym { fill: #6f9a20; }
.lab-x { fill: #e8e2d0; }
.lab-z { fill: #1420c8; }
.lab-ax { fill: #c9474a; font-size: 12px; }
.lab-ay { fill: #2f9e44; font-size: 11px; }
.watermark { position: absolute; right: 3px; bottom: 3px; font-family: "Liberation Mono", "Noto Sans CJK SC", monospace; font-size: 13px; letter-spacing: 2.200px; color: #44474e; text-shadow: 0 0 2px #fff; white-space: nowrap; }

/* dialog */
.dialog { position: absolute; left: 460px; top: 170px; width: 373px; height: 488px; background: #eeeeee; display: flex; flex-direction: column; font-size: 15px; }
.dlg-title { height: 27px; flex: none; background: #045f85; color: #fff; display: flex; align-items: center; padding: 0 10px 0 8px; }
.dlg-name { margin-left: 9px; font-size: 17.500px; }
.dlg-help { margin-left: auto; font-weight: 700; font-size: 16px; font-family: "Liberation Sans", sans-serif; }
.dlg-x { margin-left: 16px; }
.dlg-body { flex: 1; padding: 4px 5px 0; display: flex; flex-direction: column; gap: 3px; }
.sec { background: #fff; border-bottom: 1px solid #c9c9c9; padding: 0 11px 0 10px; flex: none; }
.sec-head { height: 30px; line-height: 30px; font-size: 18px; color: #21708f; display: flex; align-items: center; gap: 10px; margin-left: -2px; }
.tri { width: 0; height: 0; border: 5.500px solid transparent; border-top: 6px solid #0a5f85; border-bottom: 0; }
.tri-r { width: 0; height: 0; border: 5.500px solid transparent; border-left: 6px solid #0a5f85; border-right: 0; margin-left: 3px; margin-right: 2px; }
.tri-up { display: block; width: 0; height: 0; border: 6px solid transparent; border-bottom: 6px solid #111; border-top: 0; }
.sec-geo { height: 177px; }
.sec-geo .sec-head { margin-bottom: 5px; }
.geo-row { display: flex; align-items: flex-end; gap: 2px; height: 32px; margin-bottom: 4px; }
.geo-row span { flex: 1; line-height: 20px; color: #333; }
.ib { width: 32px; height: 32px; padding: 0; background: #fff; border: 1px solid #8a8a8a; display: flex; align-items: center; justify-content: center; flex: none; }
.ib-dotted { outline: 1px dotted #777; outline-offset: -3px; }
.eye { border-color: #c9c9c9; color: #c0c0c0; }
.check { display: flex; align-items: center; gap: 4px; margin: 2px 0 0 2px; height: 20px; }
.box { width: 16px; height: 16px; border: 1px solid #777; border-radius: 3px; background: #f6f6f6; }
.sec-off { height: 71px; }
.off-row { display: flex; align-items: center; justify-content: space-between; margin-top: 5px; }
.input { border: 1px solid #8a8a8a; height: 26px; background: #fff; line-height: 24px; color: #333; }
.num { width: 90px; text-align: right; padding-right: 4px; font-size: 17.500px; }
.sec-desc { height: 105px; }
.desc { margin-top: 5px; padding-left: 4px; font-size: 15.500px; }
.mat-row { display: flex; align-items: center; justify-content: space-between; margin-top: 2px; }
.sec-layout { height: 28px; }
.collapse { height: 20px; margin-top: -3px; border-bottom: 1px solid #cfcfcf; display: flex; align-items: center; justify-content: center; padding-top: 4px; flex: none; }
.dlg-foot { display: flex; justify-content: flex-end; gap: 5px; padding: 5px 11px 0 0; }
.btn { width: 60px; height: 28px; font: inherit; font-size: 15px; padding: 0; border: 1px solid #045f85; }
.btn-ok { background: #045f85; color: #fff; }
.btn-cancel { background: #f2f2f2; color: #1d6482; }
.highlight { position: absolute; left: 726px; top: 218px; width: 82px; height: 50px; border: 3px solid #e5281f; border-radius: 3px; }
```
